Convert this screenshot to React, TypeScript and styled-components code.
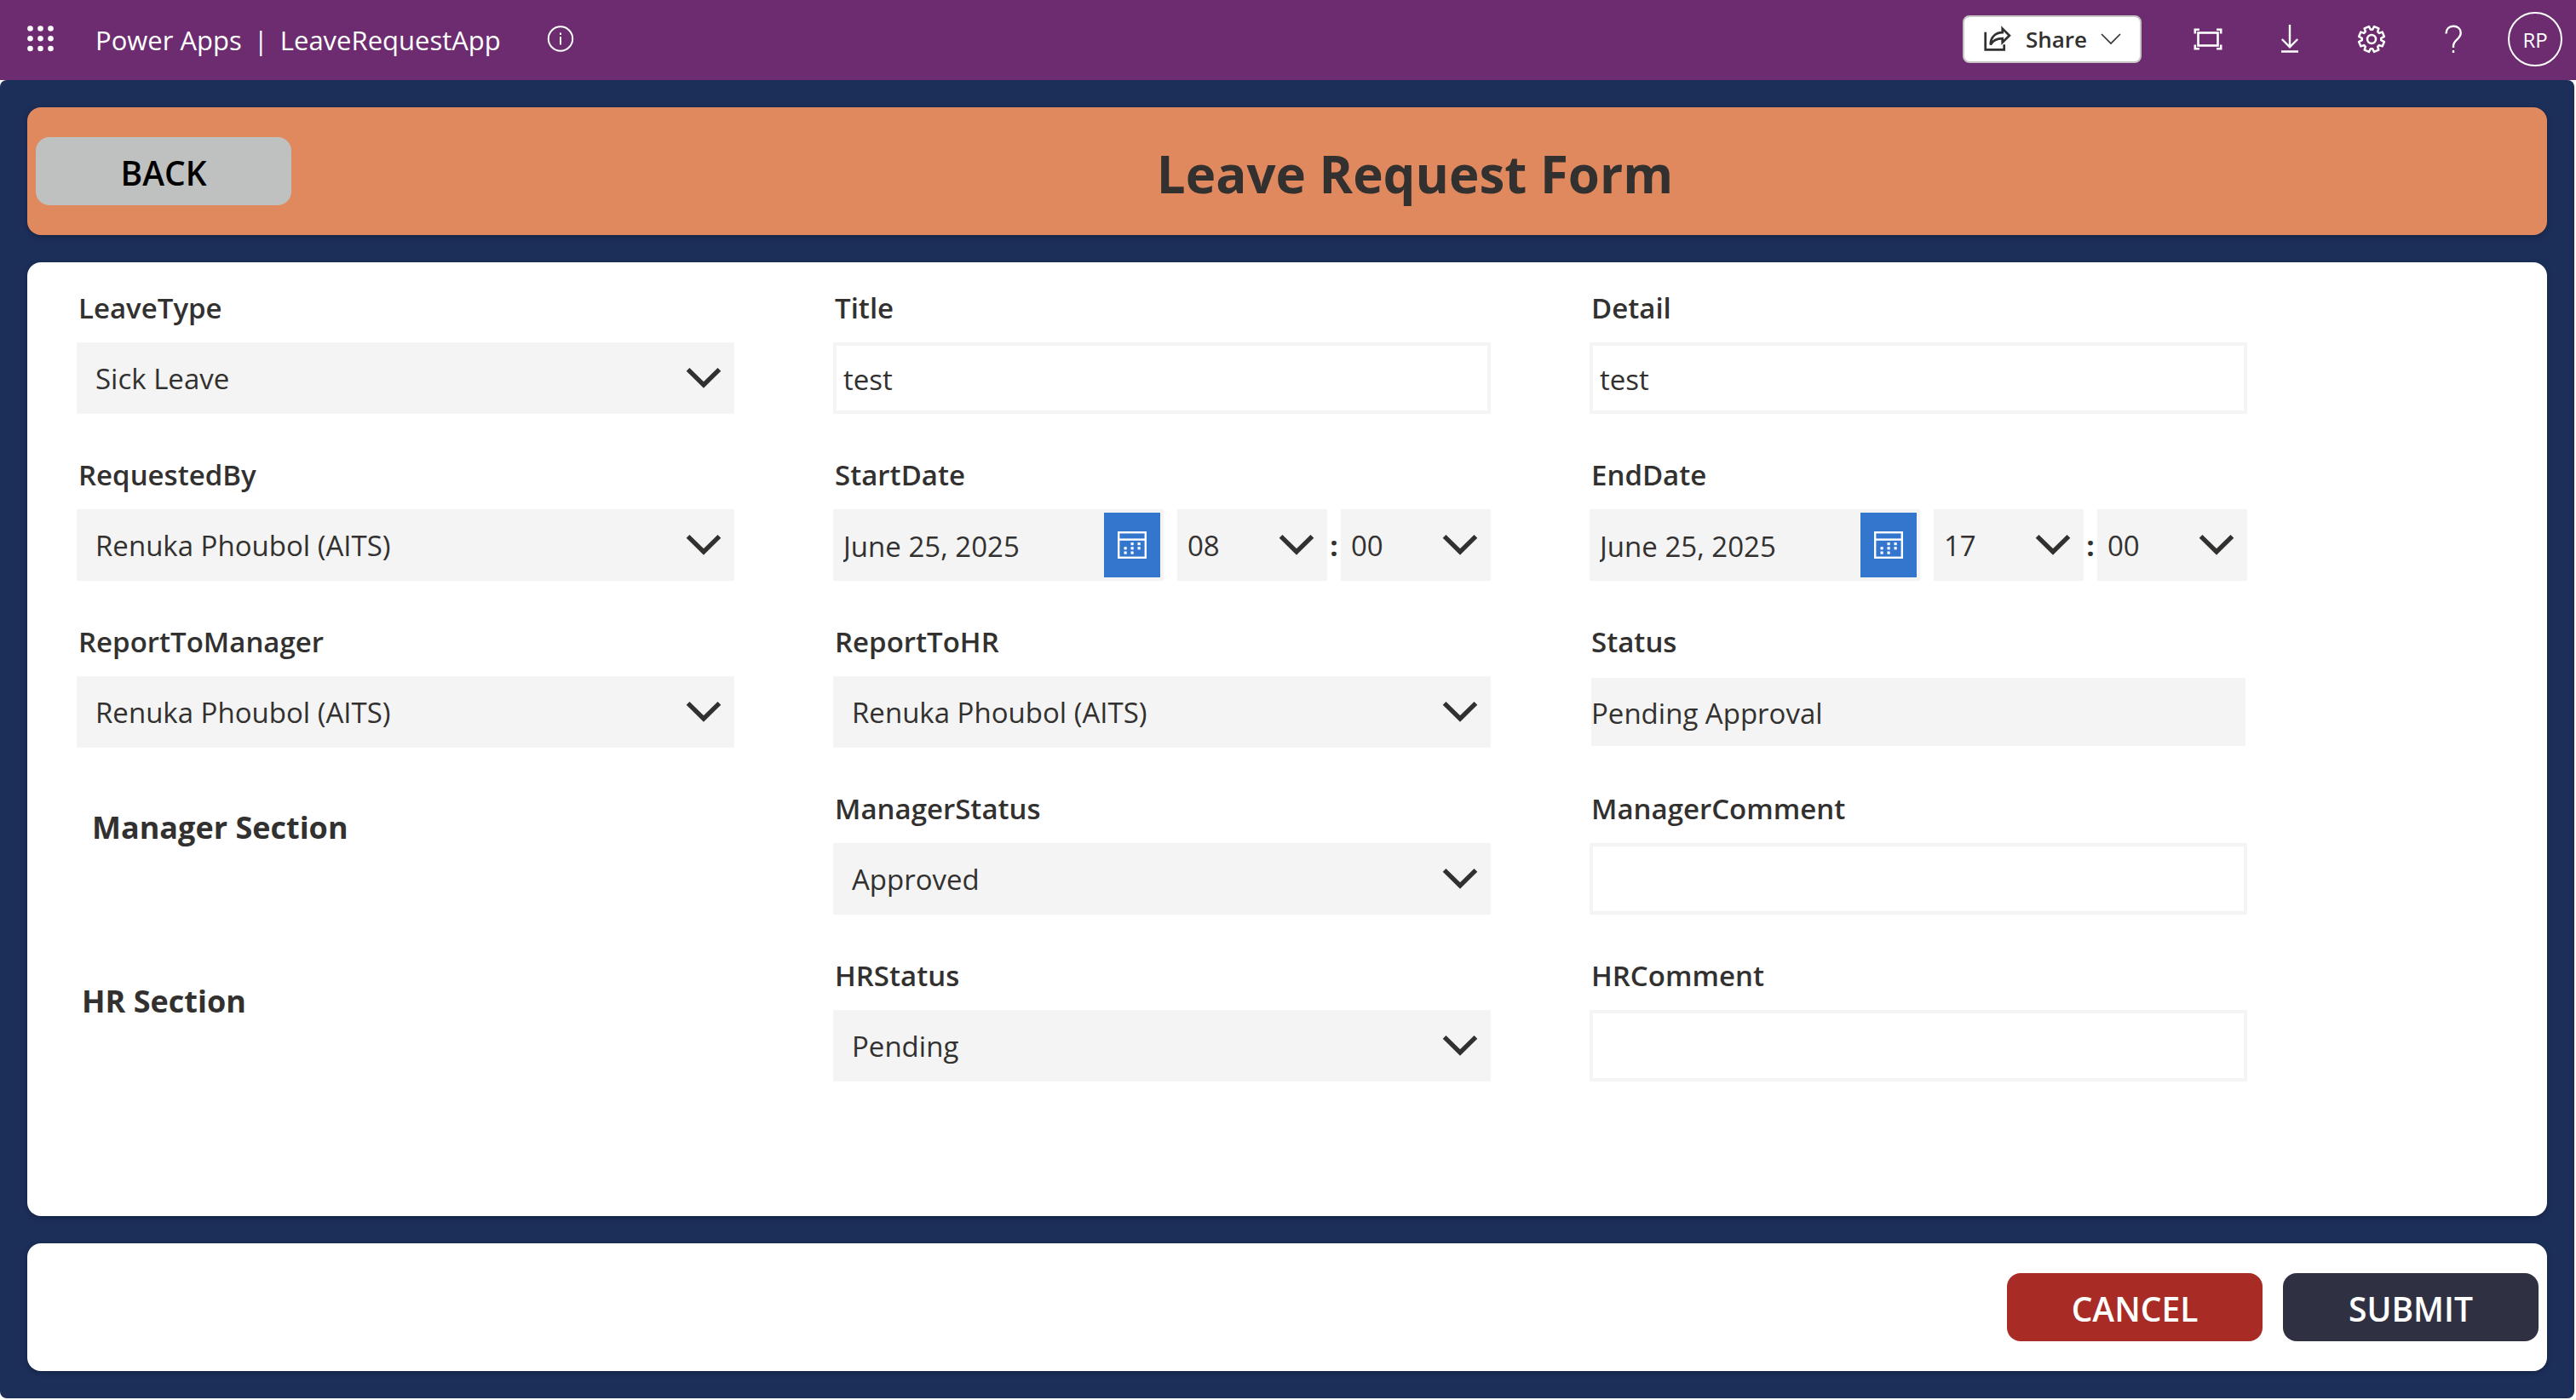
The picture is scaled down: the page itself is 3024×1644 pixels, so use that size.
import React from 'react';
import styled, { createGlobalStyle } from 'styled-components';

const GlobalStyle = createGlobalStyle`
  *, *::before, *::after { box-sizing: border-box; }
  html, body, #root { height: 100%; }
  body {
    margin: 0;
    background: #ffffff;
    color: #323130;
    font-family: 'Segoe UI', 'Open Sans', 'Noto Sans', sans-serif;
  }
  button, input, select { font: inherit; color: inherit; margin: 0; }
`;

const Page = styled.div`
  min-height: 100%;
  display: flex;
  flex-direction: column;
`;

const TopBar = styled.header`
  height: 94px;
  flex: none;
  display: flex;
  align-items: center;
  justify-content: space-between;
  padding: 0 16px 2px;
  background: #6c2c6f;
  color: #ffffff;
`;

const BarGroup = styled.div<{ $gap: number }>`
  display: flex;
  align-items: center;
  gap: ${(p) => p.$gap}px;
`;

const IconButton = styled.button`
  display: grid;
  place-items: center;
  width: 64px;
  height: 64px;
  padding: 0;
  border: 0;
  background: transparent;
  cursor: pointer;
`;

const Brand = styled.div`
  display: flex;
  gap: 14px;
  padding: 2px 38px 0 32px;
  font-size: 31px;
  line-height: 40px;
  font-weight: 500;
`;

const ShareButton = styled.button`
  display: flex;
  align-items: center;
  gap: 16px;
  height: 56px;
  padding: 0 22px;
  margin-right: 14px;
  border: 2px solid #c8c6c4;
  border-radius: 8px;
  background: #ffffff;
  color: #323130;
  font-size: 26px;
  font-weight: 600;
  cursor: pointer;
`;

const Avatar = styled.button`
  width: 64px;
  height: 64px;
  padding: 0;
  border: 2px solid #ffffff;
  border-radius: 50%;
  background: transparent;
  font-size: 24px;
  font-weight: 500;
  cursor: pointer;
`;

const Canvas = styled.main`
  flex: 1;
  display: flex;
  flex-direction: column;
  gap: 32px;
  margin: 0 2px 2px 0;
  padding: 32px;
  border-radius: 8px;
  background: #1c2f59;
`;

const Panel = styled.section<{ $tone?: string }>`
  display: flex;
  align-items: center;
  min-height: 150px;
  padding: 0 10px;
  border-radius: 16px;
  background: ${(p) => p.$tone ?? '#ffffff'};
  box-shadow: 0 2px 6px rgba(0, 0, 0, 0.25);
`;

const ActionBar = styled(Panel)`
  justify-content: flex-end;
  gap: 24px;
`;

const ActionButton = styled.button<{ $bg: string; $fg: string }>`
  flex: none;
  width: 300px;
  height: 80px;
  padding: 2px 0 0;
  border: 0;
  border-radius: 16px;
  background: ${(p) => p.$bg};
  color: ${(p) => p.$fg};
  font-size: 39px;
  font-weight: 600;
  cursor: pointer;
`;

const FormTitle = styled.h1`
  flex: 1;
  margin: 0;
  padding-top: 6px;
  font-size: 60px;
  line-height: 80px;
  font-weight: 700;
  text-align: center;
`;

const FormPanel = styled.form`
  flex: 1;
  display: grid;
  grid-template-columns: repeat(3, minmax(0, 1fr));
  grid-auto-rows: 144px;
  gap: 52px 116px;
  padding: 34px 352px 34px 58px;
  border-radius: 16px;
  background: #ffffff;
  box-shadow: 0 2px 6px rgba(0, 0, 0, 0.25);
`;

const Field = styled.div`
  display: flex;
  flex-direction: column;
  gap: 20px;
`;

const Label = styled.label`
  padding-left: 2px;
  font-size: 33px;
  line-height: 40px;
  font-weight: 600;
`;

const SectionTitle = styled.h2<{ $indent: number; $top: number }>`
  margin: 0;
  padding: ${(p) => p.$top}px 0 0 ${(p) => p.$indent}px;
  font-size: 36px;
  line-height: 48px;
  font-weight: 700;
`;

const TextBox = styled.input`
  width: 100%;
  height: 84px;
  padding: 2px 8px 0;
  border: 4px solid #f4f4f4;
  border-radius: 0;
  background: #ffffff;
  font-size: 33px;
  outline: 0;
`;

const StatusBox = styled(TextBox)`
  padding: 2px 0 0;
  border-color: #ffffff;
  border-width: 2px;
  background: #f4f4f4;
  background-clip: padding-box;
`;

const SelectShell = styled.div`
  flex: 1;
  min-width: 0;
  display: grid;
  grid-template: 84px / 100%;
  align-items: center;

  & > * { grid-area: 1 / 1; }
  & > svg { justify-self: end; margin-right: 15px; pointer-events: none; }
`;

const Select = styled.select<{ $pad: number }>`
  width: 100%;
  height: 84px;
  padding: 0 64px 0 ${(p) => p.$pad}px;
  border: 0;
  border-radius: 0;
  background: #f4f4f4;
  font-size: 33px;
  appearance: none;
  outline: 0;
`;

const DateRow = styled.div`
  display: flex;
  align-items: center;
`;

const DateBox = styled.div`
  flex: none;
  display: flex;
  width: 388px;
  height: 84px;
  margin-right: 16px;
  padding: 4px;
  background: #f4f4f4;
`;

const DateInput = styled.input`
  flex: 1;
  min-width: 0;
  padding: 2px 8px 0;
  border: 0;
  background: transparent;
  font-size: 33px;
  outline: 0;
`;

const CalendarButton = styled.button`
  flex: none;
  display: grid;
  place-items: center;
  width: 66px;
  padding: 0;
  border: 0;
  background: #3376cd;
  cursor: pointer;
`;

const Colon = styled.span`
  flex: none;
  width: 16px;
  font-size: 33px;
  font-weight: 700;
  text-align: center;
`;

const WaffleIcon = () => (
  <svg width="32" height="32" viewBox="0 0 32 32" fill="#fff" aria-hidden="true">
    {[3.5, 15.3, 27].map((y) => [3.5, 15.5, 27.5].map((x) => <circle key={`${x}-${y}`} cx={x} cy={y} r="3.3" />))}
  </svg>
);

const InfoIcon = () => (
  <svg width="32" height="32" viewBox="0 0 32 32" fill="none" stroke="#fff" strokeWidth="2" aria-hidden="true">
    <circle cx="16" cy="15.500" r="14.200" />
    <path d="M16 13V22.500" />
    <path d="M16 8.500v2.500" />
  </svg>
);

const ShareIcon = () => (
  <svg width="34" height="32" viewBox="0 0 34 32" fill="none" stroke="#323130" strokeWidth="2.700" aria-hidden="true">
    <path d="M2.700 7.700v20.600h22v-6" />
    <path d="M22.700 3.600l8.200 8.100-8.200 8.100v-4.600c-6.500 0-11 1.800-14 7.300 0-8.500 5.500-14.300 14-14.300z" />
  </svg>
);

const ThinChevron = () => (
  <svg width="24" height="14" viewBox="0 0 24 14" fill="none" stroke="#323130" strokeWidth="1.600" aria-hidden="true">
    <path d="M1 1l11 11L23 1" />
  </svg>
);

const FitIcon = () => (
  <svg width="34" height="26" viewBox="0 0 34 26" fill="none" stroke="#fff" strokeWidth="2.600" aria-hidden="true">
    <rect x="5.500" y="5.500" width="23" height="15" />
    <path d="M1.800 6.500V1.800H7M27 1.800h5.200V6.500M1.800 19.500v4.700H7M27 24.200h5.200V19.500" />
  </svg>
);

const DownloadIcon = () => (
  <svg width="22" height="34" viewBox="0 0 22 34" fill="none" stroke="#fff" strokeWidth="2.400" aria-hidden="true">
    <path d="M11 0v26M1.800 17l9.200 9.300L20.200 17M1 31.500h20" />
  </svg>
);

const gearPath = (() => {
  const teeth = 8;
  const pts: string[] = [];
  for (let i = 0; i < teeth; i += 1) {
    const mid = (i / teeth) * Math.PI * 2 - Math.PI / 8;
    [[-0.29, 11.3], [-0.19, 15.2], [0.19, 15.2], [0.29, 11.3]].forEach(([da, r]) => {
      pts.push(`${(17 + Math.cos(mid + da) * r).toFixed(2)} ${(17 + Math.sin(mid + da) * r).toFixed(2)}`);
    });
  }
  return `M${pts.join('L')}Z`;
})();

const GearIcon = () => (
  <svg width="34" height="34" viewBox="0 0 34 34" fill="none" stroke="#fff" strokeWidth="2.500" strokeLinejoin="round" aria-hidden="true">
    <path d={gearPath} />
    <circle cx="17" cy="17" r="5" />
  </svg>
);

const HelpIcon = () => (
  <svg width="20" height="34" viewBox="0 0 20 34" fill="none" stroke="#fff" strokeWidth="2.400" aria-hidden="true">
    <path d="M1.500 10.500C1.500 5 5 1.700 10 1.700s8.700 3 8.700 8c0 7-8.700 8.300-8.700 15.300v2" />
    <path d="M10 30v3" />
  </svg>
);

const Chevron = () => (
  <svg width="42" height="24" viewBox="0 0 42 24" fill="none" stroke="#323130" strokeWidth="5.400" aria-hidden="true">
    <path d="M2.600 1.900L21 20 39.400 1.900" />
  </svg>
);

const CalendarIcon = () => (
  <svg width="34" height="32" viewBox="0 0 34 32" fill="none" stroke="#fff" strokeWidth="2.400" aria-hidden="true">
    <rect x="1.200" y="1.200" width="31.600" height="29.600" />
    <path d="M1 9.600h32" />
    <g fill="#fff" stroke="none">
      {[[15.5, 13], [23.5, 13], [7.5, 18.2], [15.5, 18.2], [23.5, 18.2], [7.5, 23.5], [15.5, 23.5]].map(([x, y]) => (
        <rect key={`${x}-${y}`} x={x} y={y} width="3.200" height="3.200" />
      ))}
    </g>
  </svg>
);

type DropdownProps = { id?: string; value: string; options?: string[]; pad?: number; name?: string };

const Dropdown = ({ id, value, options = [], pad = 22, name }: DropdownProps) => (
  <SelectShell>
    <Select id={id} defaultValue={value} $pad={pad} aria-label={name}>
      {[value, ...options].map((o) => (
        <option key={o}>{o}</option>
      ))}
    </Select>
    <Chevron />
  </SelectShell>
);

const SelectField = ({ label, value, options }: { label: string; value: string; options?: string[] }) => (
  <Field>
    <Label htmlFor={label}>{label}</Label>
    <Dropdown id={label} value={value} options={options} />
  </Field>
);

const TextField = ({ label, value = '' }: { label: string; value?: string }) => (
  <Field>
    <Label htmlFor={label}>{label}</Label>
    <TextBox id={label} type="text" defaultValue={value} />
  </Field>
);

const DateField = ({ label, date, hour, minute }: { label: string; date: string; hour: string; minute: string }) => (
  <Field>
    <Label htmlFor={label}>{label}</Label>
    <DateRow>
      <DateBox>
        <DateInput id={label} type="text" defaultValue={date} />
        <CalendarButton type="button" aria-label={`Open ${label} calendar`}>
          <CalendarIcon />
        </CalendarButton>
      </DateBox>
      <Dropdown name={`${label} hour`} value={hour} pad={12} />
      <Colon>:</Colon>
      <Dropdown name={`${label} minute`} value={minute} pad={12} />
    </DateRow>
  </Field>
);

export default function App() {
  return (
    <Page>
      <GlobalStyle />
      <TopBar>
        <BarGroup $gap={0}>
          <IconButton type="button" aria-label="App launcher"><WaffleIcon /></IconButton>
          <Brand>
            <span>Power Apps</span>
            <span>|</span>
            <span>LeaveRequestApp</span>
          </Brand>
          <IconButton type="button" aria-label="App details"><InfoIcon /></IconButton>
        </BarGroup>
        <BarGroup $gap={32}>
          <ShareButton type="button">
            <ShareIcon />
            Share
            <ThinChevron />
          </ShareButton>
          <IconButton type="button" aria-label="Fit to page"><FitIcon /></IconButton>
          <IconButton type="button" aria-label="Download"><DownloadIcon /></IconButton>
          <IconButton type="button" aria-label="Settings"><GearIcon /></IconButton>
          <IconButton type="button" aria-label="Help"><HelpIcon /></IconButton>
          <Avatar type="button">RP</Avatar>
        </BarGroup>
      </TopBar>
      <Canvas>
        <Panel $tone="#e0885e">
          <ActionButton type="button" $bg="#bfc1c0" $fg="#000000">BACK</ActionButton>
          <FormTitle>Leave Request Form</FormTitle>
        </Panel>
        <FormPanel id="leave-request" onSubmit={(e) => e.preventDefault()}>
          <SelectField label="LeaveType" value="Sick Leave" />
          <TextField label="Title" value="test" />
          <TextField label="Detail" value="test" />
          <SelectField label="RequestedBy" value="Renuka Phoubol (AITS)" />
          <DateField label="StartDate" date="June 25, 2025" hour="08" minute="00" />
          <DateField label="EndDate" date="June 25, 2025" hour="17" minute="00" />
          <SelectField label="ReportToManager" value="Renuka Phoubol (AITS)" />
          <SelectField label="ReportToHR" value="Renuka Phoubol (AITS)" />
          <Field>
            <Label htmlFor="Status">Status</Label>
            <StatusBox id="Status" type="text" readOnly defaultValue="Pending Approval" />
          </Field>
          <SectionTitle $indent={18} $top={18}>Manager Section</SectionTitle>
          <SelectField label="ManagerStatus" value="Approved" />
          <TextField label="ManagerComment" />
          <SectionTitle $indent={6} $top={26}>HR Section</SectionTitle>
          <SelectField label="HRStatus" value="Pending" />
          <TextField label="HRComment" />
        </FormPanel>
        <ActionBar>
          <ActionButton type="button" $bg="#a92b26" $fg="#ffffff">CANCEL</ActionButton>
          <ActionButton type="submit" form="leave-request" $bg="#2f3142" $fg="#ffffff">SUBMIT</ActionButton>
        </ActionBar>
      </Canvas>
    </Page>
  );
}
